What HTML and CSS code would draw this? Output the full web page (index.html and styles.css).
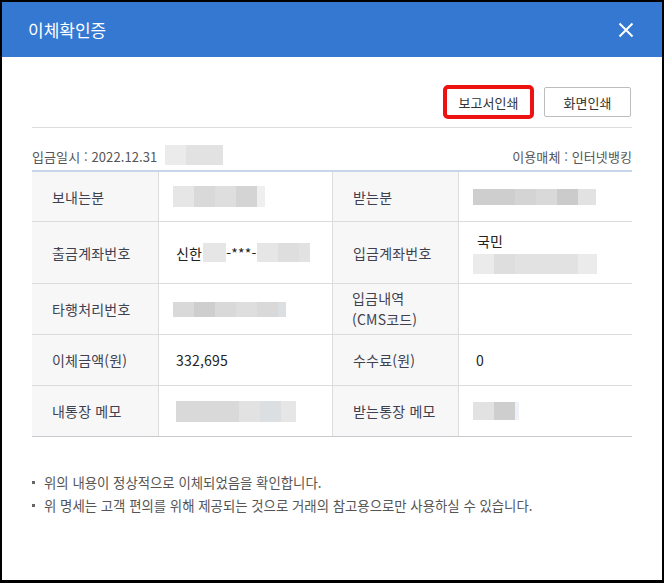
FILE: index.html
```html
<!DOCTYPE html>
<html lang="ko">
<head>
<meta charset="utf-8">
<title>이체확인증</title>
<link rel="stylesheet" href="styles.css">
</head>
<body>
<div class="modal">
  <header class="modal-head">
    <h1 class="title">이체확인증</h1>
    <button class="close" aria-label="닫기">
      <svg width="16" height="16" viewBox="0 0 16 16"><path d="M1.5 1.5 L14.5 14.5 M14.5 1.5 L1.5 14.5" stroke="#fff" stroke-width="2" fill="none"/></svg>
    </button>
  </header>
  <div class="modal-body">
    <div class="actions">
      <button class="btn btn-hl">보고서인쇄</button>
      <button class="btn">화면인쇄</button>
    </div>
    <div class="info">
      <div class="info-left">입금일시 : 2022.12.31 <span class="blur blur-date"><i class="g1 w21"></i><i class="g3 w37"></i></span></div>
      <div class="info-right">이용매체 : 인터넷뱅킹</div>
    </div>
    <div class="grid">
      <div class="th r1">보내는분</div>
      <div class="td r1"><span class="blur h21 shift"><i class="g2 w21"></i><i class="g5 w21"></i><i class="g4 w21"></i><i class="g7 w21"></i><i class="g0 w8"></i></span></div>
      <div class="th r1">받는분</div>
      <div class="td r1 last"><span class="blur h16 shift"><i class="g8 w21"></i><i class="g8 w21"></i><i class="g7 w21"></i><i class="g5 w21"></i><i class="g9 w21"></i><i class="g3 w18"></i></span></div>

      <div class="th r2">출금계좌번호</div>
      <div class="td r2"><span class="acct">신한<span class="blur h19 mx1"><i class="g2 w23"></i></span>-***-<span class="blur h19"><i class="g2 w21"></i><i class="g4 w21"></i><i class="g3 w11"></i></span></span></div>
      <div class="th r2">입금계좌번호</div>
      <div class="td r2 last stack"><span class="bank">국민</span><span class="blur h20 shift"><i class="g1 w21"></i><i class="g4 w21"></i><i class="g3 w21"></i><i class="g3 w21"></i><i class="g3 w21"></i><i class="g1 w19"></i></span></div>

      <div class="th r3">타행처리번호</div>
      <div class="td r3"><span class="blur h15 shift"><i class="g5 w21"></i><i class="g8 w21"></i><i class="g5 w21"></i><i class="g4 w21"></i><i class="g5 w21"></i><i class="g6 w8"></i></span></div>
      <div class="th r3 two">입금내역<br>(CMS코드)</div>
      <div class="td r3 last"></div>

      <div class="th r4">이체금액(원)</div>
      <div class="td r4">332,695</div>
      <div class="th r4">수수료(원)</div>
      <div class="td r4 last">0</div>

      <div class="th r5 bottom">내통장 메모</div>
      <div class="td r5 bottom"><span class="blur h21"><i class="g5 w21"></i><i class="g5 w21"></i><i class="g5 w21"></i><i class="g3 w21"></i><i class="g6 w21"></i><i class="g2 w15"></i></span></div>
      <div class="th r5 bottom">받는통장 메모</div>
      <div class="td r5 bottom last"><span class="blur h18 shift"><i class="g3 w21"></i><i class="g8 w21"></i><i class="g10 w4"></i></span></div>
    </div>
    <ul class="notes">
      <li>위의 내용이 정상적으로 이체되었음을 확인합니다.</li>
      <li>위 명세는 고객 편의를 위해 제공되는 것으로 거래의 참고용으로만 사용하실 수 있습니다.</li>
    </ul>
  </div>
</div>
</body>
</html>
```
FILE: styles.css
```css
* { box-sizing: border-box; }
html, body { margin: 0; padding: 0; }
body {
  background: #000;
  width: 664px;
  height: 583px;
  padding: 2px 2px 3px 2px;
  font-family: "Noto Sans CJK KR", "Noto Sans", sans-serif;
}
.modal {
  background: #fff;
  width: 660px;
  height: 578px;
  display: flex;
  flex-direction: column;
}
.modal-head {
  background: #3578d1;
  height: 55px;
  display: flex;
  align-items: center;
  justify-content: space-between;
  padding: 0 28px 0 26px;
}
.title {
  margin: 0;
  color: #fff;
  font-size: 17px;
  font-weight: 400;
  letter-spacing: 0;
  line-height: 20px;
}
.close {
  background: none;
  border: 0;
  padding: 0;
  width: 16px;
  height: 16px;
  display: flex;
  margin-top: 1px;
}
.modal-body {
  padding: 0 30px;
}
.actions {
  display: flex;
  justify-content: flex-end;
  gap: 12px;
  padding: 30px 1px 10px 0;
  border-bottom: 1px solid #dcdcdc;
}
.btn {
  width: 87px;
  height: 30px;
  background: #fff;
  border: 1px solid #bdbdbd;
  border-radius: 2px;
  font-family: inherit;
  font-size: 13px;
  color: #333;
  padding: 0;
  letter-spacing: 0;
}
.btn-hl {
  outline: 4px solid #ee1111;
  outline-offset: -2px;
  border-radius: 3px;
}
.info {
  display: flex;
  justify-content: space-between;
  align-items: center;
  padding-top: 19px;
  height: 39px;
  margin-bottom: 3px;
  font-size: 13px;
  color: #555;
  line-height: 20px;
  letter-spacing: 0.1px;
}
.info-left { display: flex; align-items: center; }
.blur {
  display: inline-flex;
  vertical-align: middle;
}
.blur i { display: block; height: 100%; }
.blur-date { height: 20px; margin-left: 8px; margin-top: -4px; }
.h15 { height: 15px; }
.h16 { height: 16px; }
.h18 { height: 18px; }
.h19 { height: 19px; }
.h20 { height: 20px; }
.h21 { height: 21px; }
.shift { margin-left: -3px; }
.mx1 { margin: 0 0 0 1px; }
.w4 { width: 4px; } .w8 { width: 8px; } .w11 { width: 11px; } .w15 { width: 15px; }
.w18 { width: 18px; } .w19 { width: 19px; } .w21 { width: 21px; } .w23 { width: 23px; } .w37 { width: 37px; }
.g0 { background: #efefef; }
.g1 { background: #ebebeb; }
.g2 { background: #e6e6e6; }
.g3 { background: #e2e2e2; }
.g4 { background: #dedede; }
.g5 { background: #d9d9d9; }
.g6 { background: #dcdfe2; }
.g7 { background: #d4d4d4; }
.g8 { background: #cecece; }
.g9 { background: #cbcbcb; }
.g10 { background: #eef2f8; }
.grid {
  display: grid;
  grid-template-columns: 127px 174px 126px 173px;
  grid-template-rows: 50px 62px 51px 51px 51px;
  border-top: 2px solid #c6d5ea;
}
.th, .td {
  display: flex;
  align-items: center;
  border-bottom: 1px solid #dcdcdc;
  border-right: 1px solid #dcdcdc;
  font-size: 14px;
  letter-spacing: 0.2px;
}
.th {
  background: #f7f7f7;
  color: #3f4150;
  padding-left: 20px;
}
.td {
  background: #fff;
  color: #222;
  padding-left: 17px;
}
.td.last { border-right: 0; }
.th.two { line-height: 21px; padding-left: 19px; }
.bottom { border-bottom-color: #c9c9cf; }
.acct { display: inline-flex; align-items: center; }
.stack {
  flex-direction: column;
  align-items: flex-start;
  justify-content: flex-start;
  padding-top: 9px;
}
.bank { line-height: 20px; margin-bottom: 3px; margin-left: 1px; }
.notes {
  list-style: none;
  margin: 34px 0 0 0;
  padding: 0;
  font-size: 13.4px;
  line-height: 23px;
  color: #555;
  letter-spacing: 0;
}
.notes li {
  position: relative;
  padding-left: 12px;
}
.notes li::before {
  content: "";
  position: absolute;
  left: 0;
  top: 10px;
  width: 3px;
  height: 3px;
  background: #666;
}
```
